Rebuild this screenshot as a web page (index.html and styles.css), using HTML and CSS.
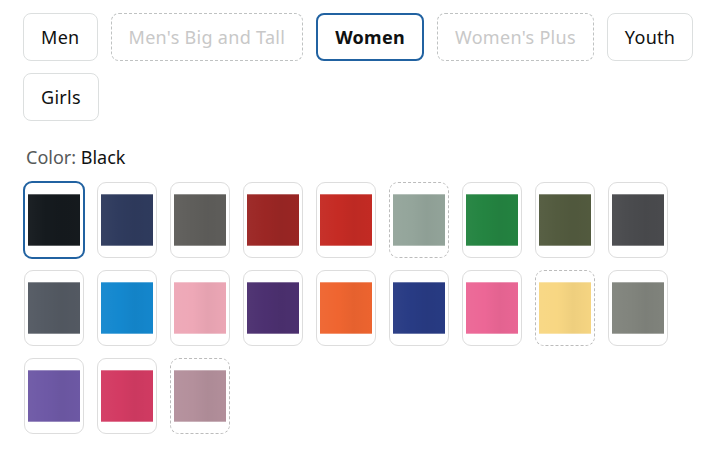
FILE: index.html
```html
<!DOCTYPE html>
<html lang="en">
<head>
<meta charset="utf-8">
<title>Size and color options</title>
<link rel="stylesheet" href="styles.css">
</head>
<body>
<main class="picker">
  <div class="sizes">
    <button class="size">Men</button>
    <button class="size size-unavailable">Men's Big and Tall</button>
    <button class="size size-selected">Women</button>
    <button class="size size-unavailable">Women's Plus</button>
    <button class="size">Youth</button>
    <button class="size">Girls</button>
  </div>
  <p class="color-label">Color: <span class="color-value">Black</span></p>
  <div class="swatches">
    <button class="swatch swatch-selected"><span class="swatch-img c-black"></span></button>
    <button class="swatch"><span class="swatch-img c-navy"></span></button>
    <button class="swatch"><span class="swatch-img c-charcoal"></span></button>
    <button class="swatch"><span class="swatch-img c-cranberry"></span></button>
    <button class="swatch"><span class="swatch-img c-red"></span></button>
    <button class="swatch swatch-unavailable"><span class="swatch-img c-sage"></span></button>
    <button class="swatch"><span class="swatch-img c-green"></span></button>
    <button class="swatch"><span class="swatch-img c-olive"></span></button>
    <button class="swatch"><span class="swatch-img c-darkgrey"></span></button>
    <button class="swatch"><span class="swatch-img c-slate"></span></button>
    <button class="swatch"><span class="swatch-img c-blue"></span></button>
    <button class="swatch"><span class="swatch-img c-pink"></span></button>
    <button class="swatch"><span class="swatch-img c-purple"></span></button>
    <button class="swatch"><span class="swatch-img c-orange"></span></button>
    <button class="swatch"><span class="swatch-img c-royal"></span></button>
    <button class="swatch"><span class="swatch-img c-hotpink"></span></button>
    <button class="swatch swatch-unavailable"><span class="swatch-img c-yellow"></span></button>
    <button class="swatch"><span class="swatch-img c-grey"></span></button>
    <button class="swatch"><span class="swatch-img c-violet"></span></button>
    <button class="swatch"><span class="swatch-img c-raspberry"></span></button>
    <button class="swatch swatch-unavailable"><span class="swatch-img c-mauve"></span></button>
  </div>
</main>
</body>
</html>
```
FILE: styles.css
```css
* {
  box-sizing: border-box;
}

html, body {
  margin: 0;
  background: #ffffff;
}

body {
  font-family: "Noto Sans", "DejaVu Sans", sans-serif;
  color: #0f1111;
}

.picker {
  padding: 13px 0 0 23px;
}

.sizes {
  display: flex;
  flex-wrap: wrap;
  gap: 12px 13px;
  width: 675px;
}

.size {
  height: 48px;
  padding: 0 17px;
  border: 1px solid #dcdfdf;
  border-radius: 8px;
  background: #ffffff;
  font-family: inherit;
  font-size: 18px;
  letter-spacing: 0.3px;
  color: #0f1111;
  display: flex;
  align-items: center;
}

.size-unavailable {
  border: 1px dashed #bfc2c2;
  color: #c8c8c8;
}

.size-selected {
  border: 2px solid #2162a1;
  padding: 0 17px;
  font-weight: 700;
}

.color-label {
  margin: 24px 0 0 3px;
  font-size: 18px;
  line-height: 24px;
  color: #565959;
}

.color-value {
  color: #0f1111;
}

.swatches {
  display: grid;
  grid-template-columns: repeat(9, 60px);
  gap: 12px 13px;
  margin: 13px 0 0 1px;
}

.swatch {
  width: 60px;
  height: 76px;
  padding: 11px 3px;
  border: 1px solid #dddddd;
  border-radius: 9px;
  background: #ffffff;
  display: block;
}

.swatch-unavailable {
  border: 1px dashed #bcbcbc;
}

.swatch-selected {
  width: 62px;
  height: 78px;
  margin: -1px;
  border: 2px solid #2162a1;
}

.swatch-img {
  display: block;
  width: 52px;
  height: 52px;
  background-color: var(--c);
  background-image:
    linear-gradient(90deg, rgba(255,255,255,0.03) 0%, rgba(0,0,0,0) 35%, rgba(0,0,0,0.04) 65%, rgba(0,0,0,0.01) 100%);
  box-shadow: inset 0 1px 0 rgba(255,255,255,0.3), inset 0 -1px 0 rgba(255,255,255,0.3);
}

.c-black { --c: #151a1e; }
.c-navy { --c: #2f3b5e; }
.c-charcoal { --c: #5f5e5b; }
.c-cranberry { --c: #9b2624; }
.c-red { --c: #c52b24; }
.c-sage { --c: #94a59b; }
.c-green { --c: #248441; }
.c-olive { --c: #535b3f; }
.c-darkgrey { --c: #4a4b4e; }
.c-slate { --c: #545a63; }
.c-blue { --c: #1488cf; }
.c-pink { --c: #eea8b7; }
.c-purple { --c: #4c3070; }
.c-orange { --c: #ef6530; }
.c-royal { --c: #283b84; }
.c-hotpink { --c: #ec6796; }
.c-yellow { --c: #f8d783; }
.c-grey { --c: #81847d; }
.c-violet { --c: #6e59a6; }
.c-raspberry { --c: #d33b63; }
.c-mauve { --c: #b4909c; }
```
